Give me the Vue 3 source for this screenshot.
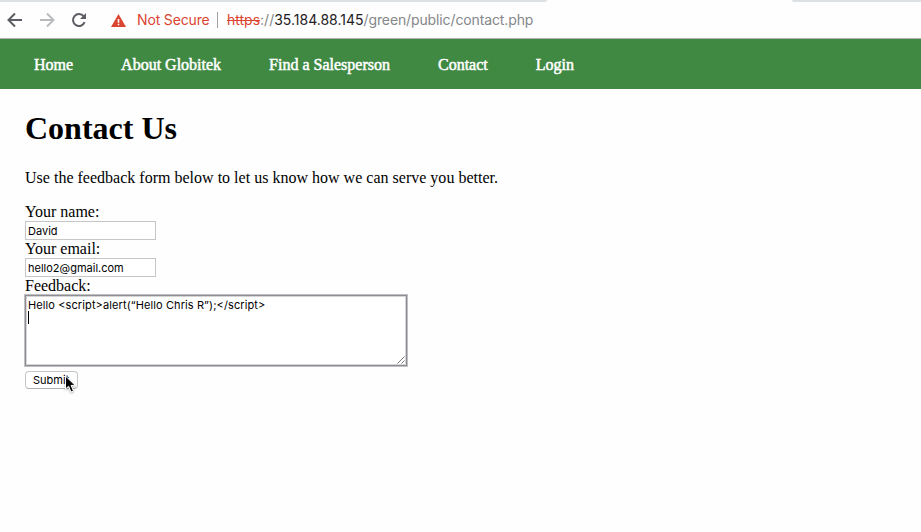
<script setup>
import { ref } from 'vue'

const links = ['Home', 'About Globitek', 'Find a Salesperson', 'Contact', 'Login']
const name = ref('David')
const email = ref('hello2@gmail.com')
const feedback = ref('Hello <script>alert(“Hello Chris R”);<\/script>')
</script>

<template>
  <div class="window">
    <div class="tabs">
      <div class="tab-left"></div>
      <div class="tab-right"></div>
    </div>
    <header class="toolbar">
      <svg class="icon back" viewBox="0 0 16 16"><path d="M15 8H2M8 1.5L1.5 8L8 14.5" /></svg>
      <svg class="icon forward" viewBox="0 0 16 16"><path d="M1 8H14M8 1.5L14.5 8L8 14.5" /></svg>
      <svg class="icon reload" viewBox="0 0 16 16">
        <path d="M13.6 10.2A6 6 0 1 1 12.7 4.3L14 5.7" />
        <path class="solid" d="M15 1V7H9Z" />
      </svg>
      <svg class="warning" viewBox="0 0 15 13">
        <path fill="#db4431" d="M7.5 0L15 13H0Z" />
        <path fill="#fff" d="M6.7 5H8.3V8.7H6.7ZM6.7 9.8H8.3V11.3H6.7Z" />
      </svg>
      <span class="insecure">Not Secure</span>
      <span class="divider"></span>
      <div class="address"><span class="scheme">https</span><span class="slashes">://</span><span class="host">35.184.88.145</span><span class="path">/green/public/contact.php</span></div>
    </header>
    <nav class="nav">
      <a v-for="link in links" :key="link">{{ link }}</a>
    </nav>
    <main class="content">
      <h1>Contact Us</h1>
      <p>Use the feedback form below to let us know how we can serve you better.</p>
      <form class="form" @submit.prevent>
        <label for="name">Your name:</label>
        <input id="name" v-model="name" type="text" />
        <label for="email">Your email:</label>
        <input id="email" v-model="email" type="text" />
        <label for="feedback">Feedback:</label>
        <div class="area">
          <textarea id="feedback" v-model="feedback" spellcheck="false"></textarea>
          <span class="caret"></span>
          <svg class="grip" viewBox="0 0 8 8"><path d="M0.5 7.5L7.5 0.5M4.5 7.5L7.5 4.5" /></svg>
        </div>
        <div class="action">
          <button type="submit">Submit</button>
          <svg class="pointer" viewBox="0 0 13 19">
            <path d="M1.5 1V14L4.6 11.2L7 17L9.5 16L7.1 10.4H11.2Z" />
          </svg>
        </div>
      </form>
    </main>
  </div>
</template>

<style>
body {
  background: #fefefe;
}
</style>

<style scoped>
.window {
  box-sizing: border-box;
  height: 532px;
  overflow: hidden;
  background: #fefefe;
  color: #000;
  font: 16px/18px "Liberation Serif", serif;
}
.tabs {
  display: flex;
  justify-content: space-between;
  height: 2px;
}
.tab-left {
  width: 547px;
  background: #dee1e4;
  border-bottom-right-radius: 3px 2px;
}
.tab-right {
  width: 129px;
  background: #dee1e4;
  border-bottom-left-radius: 3px 2px;
}
.toolbar {
  box-sizing: border-box;
  display: flex;
  align-items: center;
  height: 37px;
  padding-left: 7px;
  border-bottom: 1px solid #b5b3b5;
  font-family: Inter, sans-serif;
  font-size: 14px;
}
.icon {
  width: 16px;
  height: 16px;
  margin-right: 16px;
  flex: none;
  fill: none;
  stroke: #5b5d62;
  stroke-width: 2;
}
.forward {
  stroke: #b9babc;
}
.icon .solid {
  fill: #5b5d62;
  stroke: none;
}
.warning {
  width: 15px;
  height: 13px;
  margin: 0 11px 0 8px;
}
.insecure {
  width: 72px;
  color: #db4431;
  white-space: nowrap;
  letter-spacing: -0.15px;
}
.divider {
  width: 1px;
  height: 16px;
  margin: 0 9px 0 8px;
  background: #a0a0a0;
}
.address {
  display: flex;
  white-space: nowrap;
  color: #85878a;
}
.scheme {
  color: #db4431;
  text-decoration: line-through;
}
.host {
  color: #1f2023;
}
.path {
  letter-spacing: -0.12px;
}
.nav {
  display: flex;
  gap: 48px;
  align-items: center;
  box-sizing: border-box;
  height: 50px;
  padding: 2px 0 0 34px;
  background: #3f8943;
  color: #fff;
  -webkit-text-stroke: 0.5px #fff;
}
.content {
  padding: 21px 25px 0;
}
h1 {
  margin: 0;
  font-size: 32px;
  line-height: 37px;
}
p {
  margin: 22px 0 16px;
  letter-spacing: 0.01px;
}
.form {
  display: flex;
  flex-direction: column;
  align-items: flex-start;
}
label {
  height: 18px;
}
input,
textarea,
button {
  box-sizing: border-box;
  margin: 0;
  color: #000;
  background: #fff;
  font: 11px/13px Inter, sans-serif;
}
input {
  width: 131px;
  height: 19px;
  padding: 1px 2px 0;
  border: 1px solid #c6c6c6;
  outline: none;
}
.area {
  position: relative;
  width: 382px;
  height: 71px;
}
textarea {
  display: block;
  width: 382px;
  height: 71px;
  padding: 3px 2px;
  border: 1px solid #8e8d92;
  box-shadow: 0 0 0 1px #c0c0c4, inset 0 0 0 1px #d5d4d7;
  outline: none;
  resize: none;
  letter-spacing: 0.1px;
}
.caret {
  position: absolute;
  left: 3px;
  top: 16px;
  width: 1px;
  height: 13px;
  background: #000;
}
.grip {
  position: absolute;
  right: 2px;
  bottom: 2px;
  width: 8px;
  height: 8px;
  fill: none;
  stroke: #555;
  stroke-width: 0.8;
}
.action {
  position: relative;
  margin-top: 5px;
}
button {
  display: block;
  width: 53px;
  height: 18px;
  padding: 0 0 0 7px;
  border: 1px solid #c6c6c6;
  border-bottom-color: #b0b0b0;
  border-radius: 4px;
  text-align: left;
}
.pointer {
  position: absolute;
  left: 39px;
  top: 4px;
  width: 13px;
  height: 19px;
  fill: #000;
  stroke: #fff;
  stroke-width: 1;
  filter: drop-shadow(0 1px 1px rgba(0, 0, 0, 0.3));
}
</style>
